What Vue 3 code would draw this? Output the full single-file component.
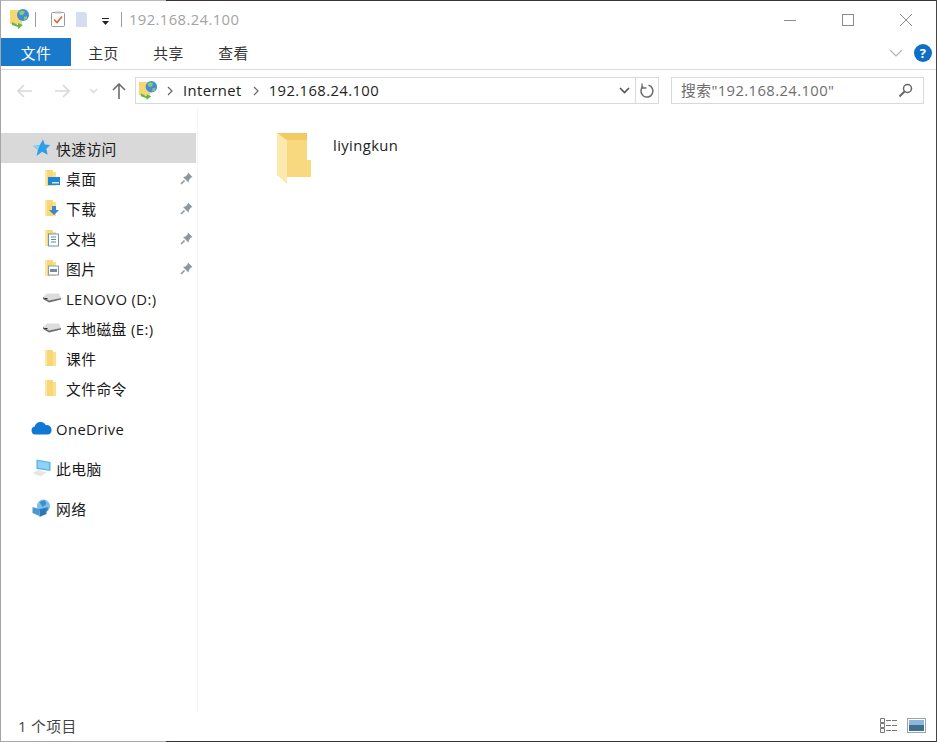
<script setup>
const tabs = ['主页', '共享', '查看']

const quick = [
  { name: '桌面', badge: 'desktop', pin: true },
  { name: '下载', badge: 'down', pin: true },
  { name: '文档', badge: 'doc', pin: true },
  { name: '图片', badge: 'pic', pin: true },
  { name: 'LENOVO (D:)', badge: 'drive', latin: true },
  { name: '本地磁盘 (E:)', badge: 'drive' },
  { name: '课件', badge: 'folder' },
  { name: '文件命令', badge: 'folder' }
]
</script>

<template>
  <div class="window">
    <div class="edge"></div>

    <header class="titlebar">
      <svg class="net-icon" width="22" height="22" viewBox="0 0 22 22">
        <rect x="1" y="2" width="12" height="14" fill="#f7d774" />
        <circle cx="14" cy="7" r="6" fill="#3f8fd8" />
        <path d="M10 4q4-3 6 0l-2 3-3 0zM15 9l3-1 0 3-3 1z" fill="#8cc96a" />
        <path d="M3 14l6 3 0-2 5 2-5 4 0-2-6-2z" fill="#5fb84e" />
      </svg>
      <span class="qa-sep"></span>
      <svg class="qa-icon" width="16" height="17" viewBox="0 0 16 17">
        <rect x="1.5" y="1.5" width="13" height="14" rx="1" fill="#fff" stroke="#9a9a9a" />
        <rect x="5" y="0.5" width="6" height="2" fill="#bbb" />
        <path d="M4 8.5l3 3 5-6" fill="none" stroke="#d9653a" stroke-width="1.6" />
      </svg>
      <svg class="qa-icon qa-doc" width="13" height="17" viewBox="0 0 13 17">
        <path d="M1 1h9l2 2v13H1z" fill="#d3dcee" />
      </svg>
      <svg class="qa-drop" width="9" height="9" viewBox="0 0 9 9">
        <rect x="1" y="1" width="7" height="1" fill="#222" />
        <path d="M1 4h7L4.500 8z" fill="#222" />
      </svg>
      <span class="qa-sep title-sep"></span>
      <span class="title">192.168.24.100</span>
      <div class="win-btns">
        <svg width="14" height="14" viewBox="0 0 14 14"><path d="M1 7.500h12" stroke="#8c8c8c" /></svg>
        <svg width="14" height="14" viewBox="0 0 14 14"><rect x="1.500" y="1.500" width="11" height="11" fill="none" stroke="#8c8c8c" /></svg>
        <svg width="14" height="14" viewBox="0 0 14 14"><path d="M1 1l12 12M13 1L1 13" stroke="#8c8c8c" /></svg>
      </div>
    </header>

    <nav class="ribbon">
      <div class="file-tab">文件</div>
      <div v-for="t in tabs" :key="t" class="tab">{{ t }}</div>
      <div class="ribbon-right">
        <svg width="14" height="8" viewBox="0 0 14 8"><path d="M1 1l6 6 6-6" fill="none" stroke="#b4b4b4" stroke-width="1.200" /></svg>
        <span class="help">?</span>
      </div>
    </nav>

    <div class="navbar">
      <div class="arrows">
        <svg width="16" height="14" viewBox="0 0 16 14"><path d="M1 7h14M7 1L1 7l6 6" fill="none" stroke="#d8d8d8" stroke-width="1.600" /></svg>
        <svg width="16" height="14" viewBox="0 0 16 14"><path d="M15 7H1M9 1l6 6-6 6" fill="none" stroke="#d8d8d8" stroke-width="1.600" /></svg>
        <svg width="9" height="6" viewBox="0 0 9 6"><path d="M1 1l3.500 3.500L8 1" fill="none" stroke="#d8d8d8" stroke-width="1.400" /></svg>
        <svg width="14" height="16" viewBox="0 0 14 16"><path d="M7 16V1M1 7l6-6 6 6" fill="none" stroke="#6d6d6d" stroke-width="1.600" /></svg>
      </div>

      <div class="address">
        <svg class="addr-icon" width="21" height="21" viewBox="0 0 22 22">
          <rect x="1" y="2" width="12" height="14" fill="#f7d774" />
          <circle cx="14" cy="7" r="6" fill="#3f8fd8" />
          <path d="M10 4q4-3 6 0l-2 3-3 0zM15 9l3-1 0 3-3 1z" fill="#8cc96a" />
          <path d="M3 14l6 3 0-2 5 2-5 4 0-2-6-2z" fill="#5fb84e" />
        </svg>
        <svg class="crumb-arrow" width="6" height="10" viewBox="0 0 6 10"><path d="M1 1l4 4-4 4" fill="none" stroke="#666" stroke-width="1.200" /></svg>
        <span class="crumb">Internet</span>
        <svg class="crumb-arrow" width="6" height="10" viewBox="0 0 6 10"><path d="M1 1l4 4-4 4" fill="none" stroke="#666" stroke-width="1.200" /></svg>
        <span class="crumb">192.168.24.100</span>
        <svg class="addr-drop" width="11" height="7" viewBox="0 0 11 7"><path d="M1 1l4.500 4.500L10 1" fill="none" stroke="#555" stroke-width="1.600" /></svg>
        <div class="refresh">
          <svg width="16" height="16" viewBox="0 0 16 16">
            <path d="M9.500 2.300A6 6 0 1 1 4.200 3.400" fill="none" stroke="#6d6d6d" stroke-width="1.500" />
            <path d="M3 0.500v4.500h4.500" fill="none" stroke="#6d6d6d" stroke-width="1.300" />
          </svg>
        </div>
      </div>

      <div class="search">
        <span>搜索"192.168.24.100"</span>
        <svg width="15" height="15" viewBox="0 0 15 15">
          <circle cx="9.500" cy="5.500" r="4" fill="none" stroke="#666" stroke-width="1.500" />
          <path d="M6.500 8.500L1.500 13.500" stroke="#666" stroke-width="2" />
        </svg>
      </div>
    </div>

    <main class="body">
      <aside class="sidebar">
        <div class="row row-top selected">
          <svg width="18" height="18" viewBox="0 0 18 18">
            <path d="M10.500 0.500l1.800 5 5.500.6-4 3.600 1.400 6L9.600 12.800 4 17l1.500-6.200L0.500 7l6.700-.8z" fill="#2d9fe8" />
            <path d="M7.200 6.200l-6.700.8 5 3.800z" fill="#8fd0f5" />
          </svg>
          <span>快速访问</span>
        </div>

        <div v-for="item in quick" :key="item.name" class="row row-sub">
          <svg v-if="item.badge === 'drive'" width="20" height="14" viewBox="0 0 20 14">
            <path d="M5 2.500h12l2 4.500L7 9.500 1 6z" fill="#dcdcdc" />
            <path d="M1 6l6 3.500L19 7v1.500L7 11.500 1 8z" fill="#6e6e6e" />
            <rect x="2.500" y="7" width="3" height="1" fill="#2b2b2b" />
          </svg>
          <svg v-else width="16" height="18" viewBox="0 0 16 18">
            <path d="M1 1h8v16H1z" fill="#f8d775" />
            <path d="M1 1h2v16H1z" fill="#fbe7a6" />
            <path d="M9 3h3v14H9z" fill="#fbe08f" />
            <template v-if="item.badge === 'desktop'">
              <rect x="4" y="8" width="12" height="8" fill="#1e86d8" />
              <rect x="8" y="13" width="7" height="1.500" fill="#cde7fb" />
            </template>
            <template v-else-if="item.badge === 'down'">
              <path d="M8 7h4v4h3l-5 5-5-5h3z" fill="#3d87cf" />
            </template>
            <template v-else-if="item.badge === 'doc'">
              <rect x="4.500" y="5" width="10" height="12" fill="#fff" stroke="#6f93b3" />
              <path d="M7 8h5M7 10.500h5M7 13h5" stroke="#5b86ad" />
            </template>
            <template v-else-if="item.badge === 'pic'">
              <rect x="4.500" y="7" width="10" height="9" fill="#fff" stroke="#8a9bab" />
              <rect x="6" y="10" width="7" height="3" fill="#6d8aa6" />
            </template>
          </svg>
          <span :class="{ nudge: item.latin }">{{ item.name }}</span>
          <svg v-if="item.pin" class="pin" width="13" height="13" viewBox="0 0 13 13">
            <path d="M8 0.500l4.500 4.500-1.500.5-2 2.500-.5 2.500-5.500-5.500 2.500-.5L7.500 2.500z" fill="#8f979e" />
            <path d="M4.500 8.500L1 12" stroke="#8f979e" stroke-width="1.600" />
          </svg>
        </div>

        <div class="row row-top group">
          <svg width="21" height="14" viewBox="0 0 21 14">
            <path d="M4.500 13.500a4 4 0 0 1-.8-7.900A6 6 0 0 1 14.800 4.200a4.700 4.700 0 0 1 5.700 5 4.200 4.200 0 0 1-3 4.300z" fill="#0f78d4" />
          </svg>
          <span class="nudge">OneDrive</span>
        </div>

        <div class="row row-top group">
          <svg width="20" height="18" viewBox="0 0 20 18">
            <path d="M5 0.500l14 2.500v9L5 10z" fill="#5db6e6" />
            <path d="M6.500 2l11 2v6.500l-11-1.800z" fill="#8fd3f4" />
            <path d="M1 14l6-3 8 2.500-6 4z" fill="#e8e6e3" />
          </svg>
          <span>此电脑</span>
        </div>

        <div class="row row-top group">
          <svg width="20" height="19" viewBox="0 0 20 19">
            <circle cx="12" cy="7" r="6.500" fill="#7cc0ea" />
            <path d="M8 3l5-2 2 4-4 3zM12 9l5-1-1 4-3 1z" fill="#3c8fcf" />
            <path d="M1 8l7 2v7l-7-3z" fill="#4a97d4" />
            <path d="M8 10l7-1v6l-7 3z" fill="#2d76b8" />
          </svg>
          <span>网络</span>
        </div>
      </aside>

      <section class="content">
        <div class="folder-item">
          <svg width="35" height="52" viewBox="0 0 35 52">
            <path d="M0 0h30v30H0z" fill="#f3c963" />
            <path d="M10 7h20v37H10z" fill="#f9d97f" />
            <path d="M26 27h8v17h-8z" fill="#f9d97f" />
            <path d="M0 0l10 7v44L0 42z" fill="#fde9ad" />
          </svg>
          <span class="folder-name">liyingkun</span>
        </div>
      </section>
    </main>

    <footer class="status">
      <span>1 个项目</span>
      <div class="views">
        <svg width="19" height="15" viewBox="0 0 19 15">
          <path d="M0.500 0.500h4v4h-4zM0.500 5.500h4v4h-4zM0.500 10.500h4v4h-4z" fill="#fff" stroke="#777" />
          <path d="M6 2.500h12M6 7.500h12M6 12.500h12" stroke="#777" stroke-dasharray="5 1" />
        </svg>
        <svg width="19" height="15" viewBox="0 0 19 15">
          <rect x="0.500" y="0.500" width="18" height="14" fill="#fff" stroke="#9aa4ad" />
          <rect x="2" y="2" width="15" height="5" fill="#8db7d8" />
          <rect x="2" y="7" width="15" height="6" fill="#3f6f8f" />
        </svg>
      </div>
    </footer>
    <div class="edge bottom"></div>
  </div>
</template>

<style>
html, body {
  margin: 0;
  background: #fff;
}
</style>

<style scoped>
.window {
  width: 937px;
  height: 742px;
  box-sizing: border-box;
  display: flex;
  flex-direction: column;
  background: #fff;
  border-left: 1px solid #a6a6a6;
  border-right: 1px solid #4a4442;
  font-family: "Open Sans", "Noto Sans CJK SC", sans-serif;
  font-size: 14.800px;
  letter-spacing: 0.4px;
  color: #1a1a1a;
  overflow: hidden;
}
.edge {
  height: 1px;
  flex: none;
  background: linear-gradient(90deg, #b8b8b8 165px, #3c3432 165px);
}
.titlebar {
  height: 37px;
  flex: none;
  display: flex;
  align-items: center;
  padding-left: 8px;
}
.net-icon { margin-top: -2px; }
.qa-sep {
  width: 1px;
  height: 15px;
  margin-left: 4px;
  background: #9c9c9c;
}
.qa-icon { margin-left: 14px; }
.qa-doc { margin-left: 9px; opacity: 0.95; }
.qa-drop { margin-left: 13px; margin-top: 3px; }
.title-sep { margin-left: 11px; }
.title {
  margin-left: 7px;
  margin-top: -2px;
  color: #a3a3a3;
}
.win-btns {
  margin-left: auto;
  display: flex;
  gap: 44px;
  padding-right: 23px;
}
.ribbon {
  flex: none;
  display: flex;
  align-items: flex-start;
  box-sizing: border-box;
  border-bottom: 1px solid #dadbdc;
  height: 32px;
}
.file-tab {
  width: 70px;
  height: 28px;
  background: #1979ca;
  color: #fff;
  display: flex;
  align-items: center;
  justify-content: center;
}
.tab {
  width: 65px;
  height: 28px;
  display: flex;
  align-items: center;
  justify-content: center;
  color: #333;
}
.ribbon-right {
  margin-left: auto;
  display: flex;
  align-items: center;
  gap: 11px;
  padding-right: 4px;
  height: 30px;
}
.help {
  width: 18px;
  height: 18px;
  border-radius: 50%;
  background: #0f6fc6;
  color: #fff;
  font-size: 13px;
  font-weight: 700;
  display: flex;
  align-items: center;
  justify-content: center;
}
.navbar {
  height: 38px;
  flex: none;
  box-sizing: border-box;
  padding-top: 3px;
  display: flex;
  align-items: center;
}
.arrows {
  width: 134px;
  flex: none;
  box-sizing: border-box;
  padding-left: 16px;
  display: flex;
  align-items: center;
  gap: 21px;
}
.arrows svg:nth-child(3) { margin-left: -2px; }
.arrows svg:nth-child(4) { margin-left: -7px; }
.address {
  width: 524px;
  height: 27px;
  flex: none;
  box-sizing: border-box;
  border: 1px solid #d9d9d9;
  display: flex;
  align-items: center;
  padding-left: 2px;
}
.addr-icon { flex: none; }
.crumb-arrow { margin: 0 10px 0 8px; flex: none; }
.crumb { color: #222; margin: -2px 3px 0 0; }
.addr-drop { margin-left: auto; margin-right: 5px; }
.refresh {
  width: 22px;
  height: 100%;
  border-left: 1px solid #d9d9d9;
  display: flex;
  align-items: center;
  justify-content: center;
}
.search {
  width: 253px;
  height: 27px;
  margin-left: 12px;
  flex: none;
  box-sizing: border-box;
  border: 1px solid #d9d9d9;
  padding: 0 10px 0 9px;
  display: flex;
  align-items: center;
  justify-content: space-between;
  color: #6d6d6d;
}
.search span { margin-top: -2px; }
.body {
  flex: 1;
  display: flex;
  min-height: 0;
}
.sidebar {
  width: 197px;
  flex: none;
  box-sizing: border-box;
  padding-top: 25px;
  border-right: 1px solid #f4f4f4;
}
.row {
  height: 30px;
  display: flex;
  align-items: center;
  width: 195px;
  box-sizing: border-box;
  position: relative;
  white-space: nowrap;
}
.row-top { padding-left: 30px; }
.row-top svg { width: 21px; flex: none; }
.row-top span { margin-left: 4px; }
.row-sub { padding-left: 41px; }
.row-sub > svg:first-child { width: 20px; flex: none; }
.row-sub span { margin-left: 4px; }
.row .nudge { margin-top: 2px; }
.selected { background: #d9d9d9; }
.group { margin-top: 10px; }
.pin { position: absolute; right: 3px; top: 9px; }
.content {
  flex: 1;
  padding: 25px 0 0 79px;
}
.folder-item {
  display: flex;
  align-items: flex-start;
}
.folder-name {
  margin-left: 21px;
  margin-top: 2px;
  color: #222;
}
.status {
  height: 28px;
  flex: none;
  box-sizing: border-box;
  padding: 0 10px 3px 17px;
  display: flex;
  align-items: center;
  justify-content: space-between;
  color: #444;
}
.status > span { margin-bottom: 1px; }
.views {
  display: flex;
  gap: 8px;
}
.bottom {
  background: linear-gradient(90deg, #a8a8a8 165px, #3c3432 165px);
  margin-top: auto;
}
</style>
